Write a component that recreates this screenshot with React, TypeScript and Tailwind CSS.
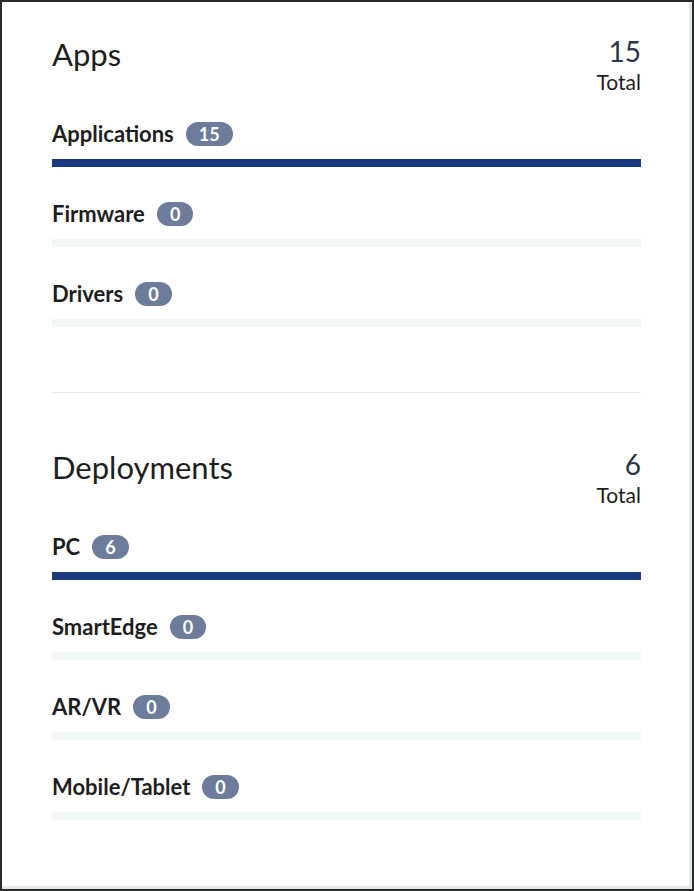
const apps = [
  { label: 'Applications', count: 15 },
  { label: 'Firmware', count: 0 },
  { label: 'Drivers', count: 0 },
];

const deployments = [
  { label: 'PC', count: 6 },
  { label: 'SmartEdge', count: 0 },
  { label: 'AR/VR', count: 0 },
  { label: 'Mobile/Tablet', count: 0 },
];

function Row({ label, count, total }: { label: string; count: number; total: number }) {
  const pct = total > 0 ? (count / total) * 100 : 0;
  return (
    <div className="mb-[35px]">
      <div className="flex items-center h-[24px]">
        <span className="text-[22px] font-bold text-[#1e1e1e] leading-none">{label}</span>
        <span className="ml-[12px] h-[24px] px-[13px] rounded-full bg-[#6d7c9b] text-white text-[18px] font-bold flex items-center justify-center leading-none">
          {count}
        </span>
      </div>
      <div className="mt-[13px] h-[8px] bg-[#f1f6f6]">
        <div className="h-full bg-[#1b3a7f]" style={{ width: `${pct}%` }} />
      </div>
    </div>
  );
}

function Section({ title, items }: { title: string; items: { label: string; count: number }[] }) {
  const total = items.reduce((s, i) => s + i.count, 0);
  return (
    <div>
      <div className="flex justify-between items-start">
        <h2 className="text-[31px] text-[#1e1e1e] leading-none mt-[2px]">{title}</h2>
        <div className="text-right">
          <div className="text-[28px] text-[#2c3649] leading-none">{total}</div>
          <div className="text-[21px] text-[#1e1e1e] leading-none mt-[6px]">Total</div>
        </div>
      </div>
      <div className="mt-[30px]">
        {items.map((i) => (
          <Row key={i.label} label={i.label} count={i.count} total={total} />
        ))}
      </div>
    </div>
  );
}

export default function App() {
  return (
    <div className="w-[694px] h-[891px] border-2 border-[#2a2a2a] bg-white" style={{ fontFamily: 'Lato, "Open Sans", sans-serif' }}>
      <div className="h-full border-r-[3px] border-b-[3px] border-[#e3e8ea] pl-[50px] pr-[48px] pt-[35px]">
        <Section title="Apps" items={apps} />
        {/* the last row's bottom margin collapses into this one */}
        <div className="mt-[65px] mb-[57px] border-t border-[#e3e8ed]" />
        <Section title="Deployments" items={deployments} />
      </div>
    </div>
  );
}
